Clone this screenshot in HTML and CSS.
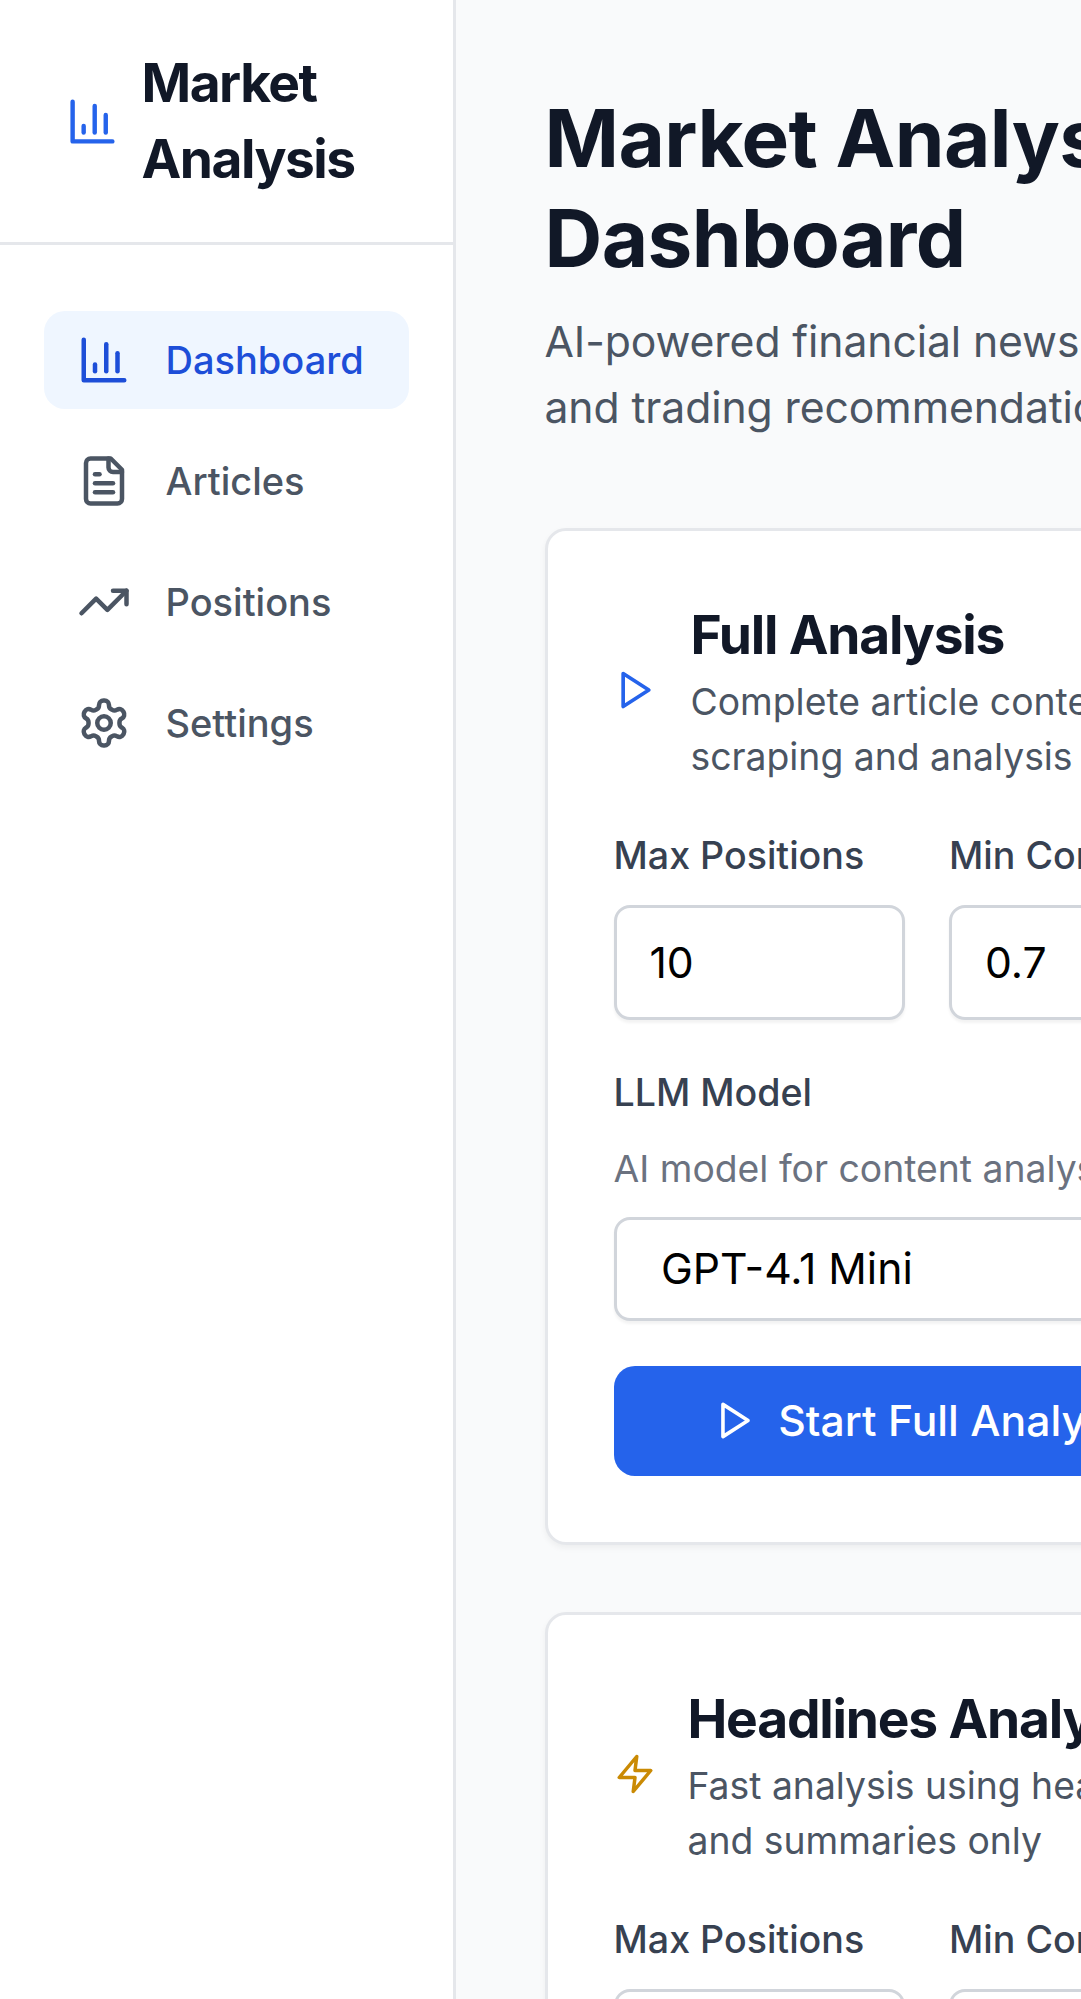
FILE: index.html
```html
<!DOCTYPE html>

<html lang="en">
<head>
	<meta charset="utf-8" />
	<title>Market Analysis Dashboard</title>

	<link rel="stylesheet" href="styles.css">
</head>
<body>
	<div class="app">
		<aside class="sidebar">
			<div class="brand">
				<svg class="icon brand-icon" viewBox="0 0 24 24"><path d="M3 3v18h18"/><path d="M18 17V9"/><path d="M13 17V5"/><path d="M8 17v-3"/></svg>
				<h2 class="brand-title">Market Analysis</h2>
			</div>
			<nav class="nav">
				<a class="nav-item active" href="#">
					<svg class="icon nav-icon" viewBox="0 0 24 24"><path d="M3 3v18h18"/><path d="M18 17V9"/><path d="M13 17V5"/><path d="M8 17v-3"/></svg>
					Dashboard
				</a>
				<a class="nav-item" href="#">
					<svg class="icon nav-icon" viewBox="0 0 24 24"><path d="M15 2H6a2 2 0 0 0-2 2v16a2 2 0 0 0 2 2h12a2 2 0 0 0 2-2V7Z"/><path d="M14 2v4a2 2 0 0 0 2 2h4"/><path d="M10 9H8"/><path d="M16 13H8"/><path d="M16 17H8"/></svg>
					Articles
				</a>
				<a class="nav-item" href="#">
					<svg class="icon nav-icon" viewBox="0 0 24 24"><polyline points="22 7 13.5 15.5 8.5 10.5 2 17"/><polyline points="16 7 22 7 22 13"/></svg>
					Positions
				</a>
				<a class="nav-item" href="#">
					<svg class="icon nav-icon" viewBox="0 0 24 24"><path d="M12.22 2h-.44a2 2 0 0 0-2 2v.18a2 2 0 0 1-1 1.73l-.43.25a2 2 0 0 1-2 0l-.15-.08a2 2 0 0 0-2.73.73l-.22.38a2 2 0 0 0 .73 2.73l.15.1a2 2 0 0 1 1 1.72v.51a2 2 0 0 1-1 1.74l-.15.09a2 2 0 0 0-.73 2.73l.22.38a2 2 0 0 0 2.73.73l.15-.08a2 2 0 0 1 2 0l.43.25a2 2 0 0 1 1 1.73V20a2 2 0 0 0 2 2h.44a2 2 0 0 0 2-2v-.18a2 2 0 0 1 1-1.73l.43-.25a2 2 0 0 1 2 0l.15.08a2 2 0 0 0 2.73-.73l.22-.39a2 2 0 0 0-.73-2.73l-.15-.08a2 2 0 0 1-1-1.74v-.5a2 2 0 0 1 1-1.74l.15-.09a2 2 0 0 0 .73-2.73l-.22-.38a2 2 0 0 0-2.73-.73l-.15.08a2 2 0 0 1-2 0l-.43-.25a2 2 0 0 1-1-1.73V4a2 2 0 0 0-2-2z"/><circle cx="12" cy="12" r="3"/></svg>
					Settings
				</a>
			</nav>
		</aside>

		<main class="main">
			<h1 class="page-title">Market Analysis Dashboard</h1>
			<p class="page-sub">AI-powered financial news analysis and trading recommendations</p>

			<section class="card">
				<div class="card-head">
					<svg class="icon card-icon play-icon" viewBox="0 0 24 24"><polygon points="5 3 19 12 5 21 5 3"/></svg>
					<div>
						<h3 class="card-title">Full Analysis</h3>
						<p class="card-desc">Complete article content scraping and analysis</p>
					</div>
				</div>
				<div class="fields">
					<div>
						<label class="field-label">Max Positions</label>
						<input class="field-input" type="text" value="10">
					</div>
					<div>
						<label class="field-label">Min Confidence</label>
						<input class="field-input" type="text" value="0.7">
					</div>
				</div>
				<label class="field-label model-label">LLM Model</label>
				<p class="field-hint">AI model for content analysis</p>
				<select class="field-select">
					<option>GPT-4.1 Mini</option>
				</select>
				<button class="run-button full-button">
					<svg class="icon button-icon" viewBox="0 0 24 24"><polygon points="5 3 19 12 5 21 5 3"/></svg>
					Start Full Analysis
				</button>
			</section>

			<section class="card">
				<div class="card-head">
					<svg class="icon card-icon zap-icon" viewBox="0 0 24 24"><polygon points="13 2 3 14 12 14 11 22 21 10 12 10 13 2"/></svg>
					<div>
						<h3 class="card-title">Headlines Analysis</h3>
						<p class="card-desc">Fast analysis using headlines and summaries only</p>
					</div>
				</div>
				<div class="fields">
					<div>
						<label class="field-label">Max Positions</label>
						<input class="field-input" type="text" value="10">
					</div>
					<div>
						<label class="field-label">Min Confidence</label>
						<input class="field-input" type="text" value="0.7">
					</div>
				</div>
			</section>
		</main>
	</div>
</body>
</html>
```

FILE: styles.css
```css
html, body
{
	margin: 0;
	height: 1999px;
	overflow: hidden;
}

body
{
	font-family: Inter, "Liberation Sans", sans-serif;
	background-color: #f9fafb;
}

h1, h2, h3, p
{
	margin: 0;
}

.app
{
	display: flex;
	width: 1400px;
	height: 1999px;
}

.icon
{
	fill: none;
	stroke: currentColor;
	stroke-width: 2;
	stroke-linecap: round;
	stroke-linejoin: round;
	flex: none;
}

/* sidebar */

.sidebar
{
	flex: none;
	box-sizing: border-box;
	width: 456px;
	background-color: white;
	border-right: 3px solid #e5e7eb;
}

.brand
{
	display: flex;
	align-items: center;
	gap: 22.5px;
	box-sizing: border-box;
	height: 245px;
	padding: 0 40px 0 66px;
	border-bottom: 3px solid #e5e7eb;
}

.brand-icon
{
	width: 53px;
	height: 53px;
	color: #2563eb;
}

.brand-title
{
	font-size: 53.3px;
	line-height: 76.5px;
	font-weight: 700;
	letter-spacing: -1.5px;
	color: #111827;
}

.nav
{
	display: flex;
	flex-direction: column;
	gap: 23px;
	padding: 66px 44px 0 44px;
}

.nav-item
{
	display: flex;
	align-items: center;
	gap: 34.5px;
	height: 98px;
	padding: 0 33px;
	border-radius: 21px;
	font-size: 38px;
	font-weight: 500;
	color: #4b5563;
	text-decoration: none;
}

.nav-item.active
{
	background-color: #eff6ff;
	color: #1d4ed8;
}

.nav-icon
{
	width: 54px;
	height: 54px;
}

/* main column */

.main
{
	flex: none;
	width: 778px;
	padding: 88px 0 0 88.5px;
}

.page-title
{
	font-size: 80px;
	line-height: 100px;
	font-weight: 700;
	letter-spacing: -0.6px;
	color: #111827;
}

.page-sub
{
	margin-top: 21px;
	font-size: 42.7px;
	line-height: 66px;
	letter-spacing: -0.1px;
	color: #4b5563;
}

.card
{
	box-sizing: border-box;
	height: 1016.5px;
	margin-top: 87px;
	padding: 65px 66px 64px 66px;
	background-color: white;
	border: 3px solid #e5e7eb;
	border-radius: 21px;
	box-shadow: 0 3px 6px rgba(0,0,0,0.05);
}

.card + .card
{
	margin-top: 67.5px;
}

.card-head
{
	display: flex;
	align-items: center;
	gap: 33px;
	margin-bottom: 45px;
}

.card-icon
{
	width: 44px;
	height: 44px;
}

.play-icon
{
	color: #2563eb;
}

.zap-icon
{
	width: 42px;
	height: 42px;
	margin-right: -1px;
	color: #ca8a04;
}

.card-title
{
	font-size: 53.3px;
	line-height: 78px;
	font-weight: 700;
	letter-spacing: -1.2px;
	color: #111827;
}

.card-desc
{
	font-size: 37.3px;
	line-height: 55px;
	color: #4b5563;
}

.fields
{
	display: grid;
	grid-template-columns: 291px 306px;
	column-gap: 44.5px;
}

.field-label
{
	display: block;
	margin-bottom: 23px;
	font-size: 37.6px;
	line-height: 53px;
	font-weight: 500;
	color: #374151;
}

.field-input, .field-select
{
	display: block;
	box-sizing: border-box;
	width: 100%;
	background-color: white;
	border: 3px solid #d1d5db;
	border-radius: 16px;
	box-shadow: 0 3px 3px rgba(0,0,0,0.05);
	font-family: inherit;
	font-size: 42.7px;
	color: black;
}

.field-input
{
	height: 115px;
	padding: 0 33px;
}

.field-select
{
	width: 642px;
	height: 104px;
	padding: 0 44.5px;
	appearance: none;
}

.model-label
{
	margin-top: 45.5px;
}

.field-hint
{
	margin-top: 4px;
	margin-bottom: 22px;
	font-size: 37.3px;
	line-height: 53px;
	color: #6b7280;
}

.run-button
{
	display: flex;
	align-items: center;
	justify-content: center;
	gap: 21px;
	width: 630px;
	height: 110px;
	margin-top: 45px;
	background-color: #2563eb;
	border: none;
	border-radius: 21px;
	font-family: inherit;
	font-size: 42.7px;
	font-weight: 500;
	color: white;
}

.button-icon
{
	width: 43px;
	height: 43px;
}
```
